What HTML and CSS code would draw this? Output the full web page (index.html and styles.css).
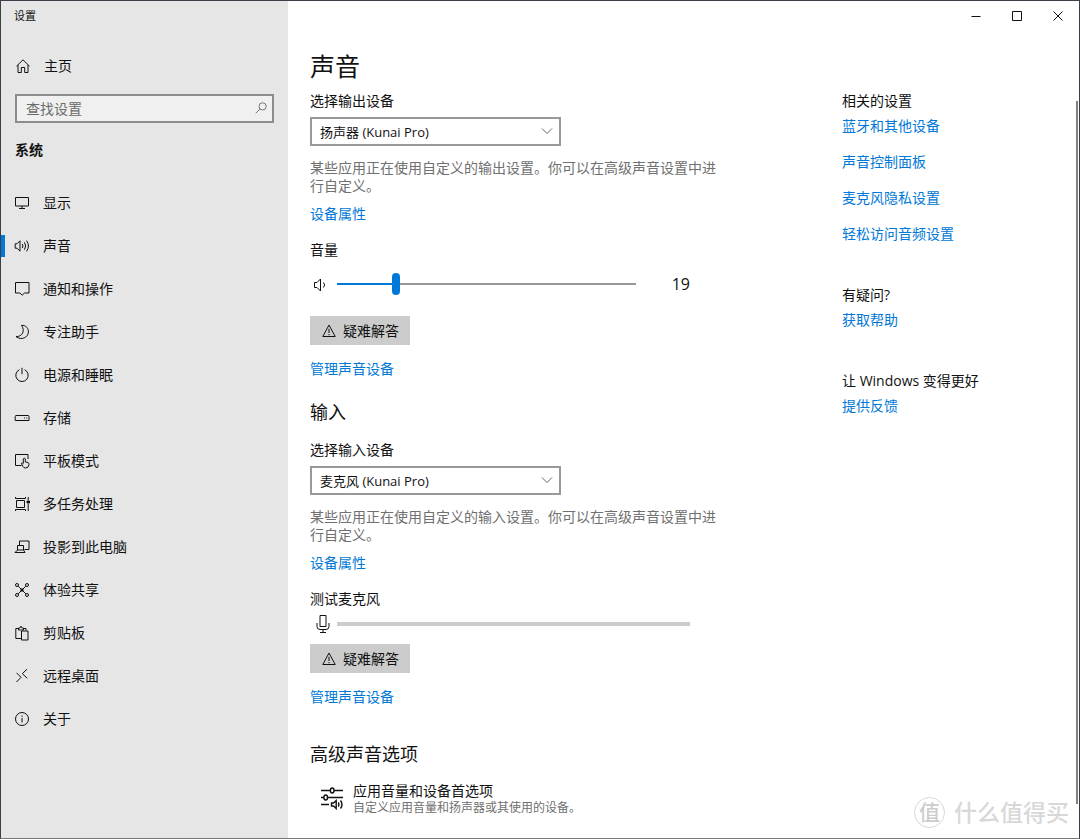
FILE: index.html
```html
<!DOCTYPE html>
<html lang="zh-CN">
<head>
<meta charset="utf-8">
<title>设置</title>
<link rel="stylesheet" href="styles.css">
</head>
<body>
<svg class="defs" aria-hidden="true">
  <symbol id="warn" viewBox="0 0 14 14"><path d="M7 1 13.2 12.5H.8Z M7 4.8V9 M7 10V11.2"/></symbol>
  <symbol id="chevron" viewBox="0 0 12 8"><path d="M1 1.5 6 6.5 11 1.5"/></symbol>
</svg>
<div class="window">
  <aside class="sidebar">
    <div class="caption">设置</div>
    <a class="home" href="#">
      <svg class="icon" viewBox="0 0 16 16"><path d="M1.5 8.2 8 1.8 14.5 8.2 M3 7V14.5H6.3V9.5H9.7V14.5H13V7"/></svg>
      主页
    </a>
    <div class="search">
      <input type="search" placeholder="查找设置" aria-label="查找设置">
      <svg class="search-icon" viewBox="0 0 12 12"><circle cx="7.6" cy="4.4" r="3.6"/><path d="M5 7 .7 11.3"/></svg>
    </div>
    <h2 class="group">系统</h2>
    <nav>
      <ul class="nav">
        <li><a href="#"><svg class="icon" viewBox="0 0 16 16"><path d="M1.5 2.5H14.5V11H1.5Z M8 11V13.5 M5 13.5H11"/></svg>显示</a></li>
        <li><a class="active" href="#"><svg class="icon" viewBox="0 0 16 16"><path d="M1.2 5.8H3L6 2.8V13.2L3 10.2H1.2Z M8.3 6Q9.6 8 8.3 10 M10.4 4.3Q13 8 10.4 11.7 M12.5 2.6Q16.4 8 12.5 13.4"/></svg>声音</a></li>
        <li><a href="#"><svg class="icon" viewBox="0 0 16 16"><path d="M1.5 1.5H15V12H10.5L8.2 14.2 5.9 12H1.5Z"/></svg>通知和操作</a></li>
        <li><a href="#"><svg class="icon" viewBox="0 0 16 16"><path d="M7.5 1.3C12 1 14.7 4.6 14.4 8.2 14 13.5 7.5 16.8 2 12.6 8.7 12.8 11.3 6.5 7.5 1.3Z"/></svg>专注助手</a></li>
        <li><a href="#"><svg class="icon" viewBox="0 0 16 16"><path d="M5.4 2.7A6.2 6.2 0 1 0 10.6 2.7 M8 .8V7.2"/></svg>电源和睡眠</a></li>
        <li><a href="#"><svg class="icon" viewBox="0 0 16 16"><path d="M2 5.5H14Q15 5.5 15 6.5V10.5H1.2V6.5Q1.2 5.5 2 5.5Z M10 8H11 M12.2 8H13.2"/></svg>存储</a></li>
        <li><a href="#"><svg class="icon" viewBox="0 0 16 16"><path d="M7.5 12.5H1.5V1.5H14V6 M9.3 10.5V5.8Q10.3 4.5 11.3 5.8V9L14 9.5Q15.2 10 15 11.5 14.7 15 11.7 15 9.5 15 8.8 13.3L7.3 10.3Q8.3 9.4 9.3 10.8"/></svg>平板模式</a></li>
        <li><a href="#"><svg class="icon" viewBox="0 0 16 16"><path d="M2.5 4.5H10.5V11.5H2.5Z M1.5 1V2.5H11.5V1 M1.5 15V13.5H11.5V15 M14.2 1V4 M14.2 8V15"/><path d="M13 5H15.5V7H13Z" fill="currentColor"/></svg>多任务处理</a></li>
        <li><a href="#"><svg class="icon" viewBox="0 0 16 16"><path d="M5.5 6V2H15V10.5H10.5 M3.5 6.5H9.5V11L11 13.5H1L3.5 11Z M3.5 11H9.5"/></svg>投影到此电脑</a></li>
        <li><a href="#"><svg class="icon" viewBox="0 0 16 16"><path d="M4.2 4.2 7 7 M11.8 4.2 9 7 M4.2 11.8 7 9 M11.8 11.8 9 9"/><circle cx="3" cy="3" r="1.5"/><circle cx="13" cy="3" r="1.5"/><circle cx="3" cy="13" r="1.5"/><circle cx="13" cy="13" r="1.5"/><circle cx="8" cy="8" r="1.2" fill="currentColor"/></svg>体验共享</a></li>
        <li><a href="#"><svg class="icon" viewBox="0 0 16 16"><path d="M7 13.5H1.8V3.5H4.5 M9.5 3.5H12V5.5 M4.5 5V3H6L7 1.2 8.2 3H9.5V5Z M7.5 6H14V15H7.5Z"/></svg>剪贴板</a></li>
        <li><a href="#"><svg class="icon" viewBox="0 0 16 16"><path d="M2.5 4.8 7 9.3 2.5 14 M13 1.2 8.3 5.7 13.2 10.2"/></svg>远程桌面</a></li>
        <li><a href="#"><svg class="icon" viewBox="0 0 16 16"><circle cx="8" cy="8" r="6.5"/><path d="M8 7V11.5 M8 4.5V5.8"/></svg>关于</a></li>
      </ul>
    </nav>
  </aside>

  <div class="page">
    <header class="titlebar">
      <button aria-label="最小化"><svg viewBox="0 0 10 10"><path d="M.5 5.5H9.5"/></svg></button>
      <button aria-label="最大化"><svg viewBox="0 0 10 10"><path d="M.5 .5H9.5V9.5H.5Z"/></svg></button>
      <button aria-label="关闭"><svg viewBox="0 0 10 10"><path d="M.5 .5 9.5 9.5 M9.5 .5 .5 9.5"/></svg></button>
    </header>
    <div class="content">
      <main>
        <h1>声音</h1>
        <section>
          <label class="label" for="output">选择输出设备</label>
          <div class="select">
            <select id="output"><option>扬声器 (Kunai Pro)</option></select>
            <svg class="chevron"><use href="#chevron"/></svg>
          </div>
          <p class="note">某些应用正在使用自定义的输出设置。你可以在高级声音设置中进行自定义。</p>
          <a class="link" href="#">设备属性</a>
          <label class="label spaced" for="volume">音量</label>
          <div class="volume">
            <svg class="speaker" viewBox="0 0 16 16"><path d="M1.5 5.5H4L7.5 2V14L4 10.5H1.5Z M10.5 5.5Q12.8 8 10.5 10.5"/></svg>
            <input id="volume" type="range" min="0" max="100" value="19">
            <output for="volume">19</output>
          </div>
          <button class="trouble"><svg><use href="#warn"/></svg>疑难解答</button>
          <a class="link" href="#">管理声音设备</a>
        </section>
        <section>
          <h2>输入</h2>
          <label class="label" for="input">选择输入设备</label>
          <div class="select">
            <select id="input"><option>麦克风 (Kunai Pro)</option></select>
            <svg class="chevron"><use href="#chevron"/></svg>
          </div>
          <p class="note">某些应用正在使用自定义的输入设置。你可以在高级声音设置中进行自定义。</p>
          <a class="link" href="#">设备属性</a>
          <div class="label spaced">测试麦克风</div>
          <div class="mic">
            <svg viewBox="0 0 16 20"><path d="M5 1.5H11V12.5H5Z M2 9V12.5Q2 15.5 5 15.5H11Q14 15.5 14 12.5V9 M8 15.5V18.5 M5 18.5H11"/></svg>
            <div class="meter"></div>
          </div>
          <button class="trouble"><svg><use href="#warn"/></svg>疑难解答</button>
          <a class="link" href="#">管理声音设备</a>
        </section>
        <section class="advanced">
          <h2>高级声音选项</h2>
          <a class="option" href="#">
            <svg viewBox="0 0 24 24"><path d="M1 4.5H10.5 M14 4.5H23 M1 11.5H4 M7.5 11.5H23 M1 18.5H9"/><ellipse cx="12.2" cy="4.5" rx="1.8" ry="2.5"/><ellipse cx="5.7" cy="11.5" rx="1.8" ry="2.5"/><path d="M11.5 17H13.5L16.2 14.5V22.5L13.5 20H11.5Z M18.2 16.5Q19.6 18.5 18.2 20.5 M20.5 14.5Q23.5 18.5 20.5 22.5"/></svg>
            <span class="option-text"><span>应用音量和设备首选项</span><small>自定义应用音量和扬声器或其使用的设备。</small></span>
          </a>
        </section>
      </main>
      <aside class="related">
        <section>
          <h3>相关的设置</h3>
          <ul>
            <li><a class="link" href="#">蓝牙和其他设备</a></li>
            <li><a class="link" href="#">声音控制面板</a></li>
            <li><a class="link" href="#">麦克风隐私设置</a></li>
            <li><a class="link" href="#">轻松访问音频设置</a></li>
          </ul>
        </section>
        <section>
          <h3>有疑问?</h3>
          <a class="link" href="#">获取帮助</a>
        </section>
        <section>
          <h3>让 Windows 变得更好</h3>
          <a class="link" href="#">提供反馈</a>
        </section>
      </aside>
    </div>
  </div>
  <div class="scrollbar"></div>
  <div class="watermark"><span class="seal">值</span>什么值得买</div>
</div>
</body>
</html>
```
FILE: styles.css
```css
* { box-sizing: border-box; }
body {
  margin: 0;
  font: 14px/20px "Open Sans", "Noto Sans CJK SC", sans-serif;
  color: #111;
  background: #fff;
}
h1, h2, h3, p, ul { margin: 0; padding: 0; font-weight: 400; }
ul { list-style: none; }
a { color: inherit; text-decoration: none; }
button, input, select { font: inherit; color: inherit; }
svg { display: block; flex: none; fill: none; stroke: currentColor; stroke-width: 1; }
.defs { position: absolute; width: 0; height: 0; }

.window {
  position: relative;
  display: flex;
  min-height: 100vh;
  border: 1px solid #3d3f48;
  border-bottom-color: #777;
  background: #fff;
}

.sidebar { flex: none; width: 287px; background: #e6e6e6; }
.caption { padding: 5px 13px 0; font-size: 11px; }
.home { display: flex; align-items: center; gap: 13px; padding: 30px 14px 0; }
.icon { width: 16px; height: 16px; }
.search { position: relative; margin: 18px 14px 0; }
.search input {
  display: block;
  width: 100%;
  height: 29px;
  padding: 0 30px 0 9px;
  border: 2px solid #8c8c8c;
  border-radius: 0;
  background: #f0f0f0;
  appearance: none;
  outline: 0;
}
.search input::placeholder { color: #6b6b6b; opacity: 1; }
.search-icon { position: absolute; right: 7px; top: 8px; width: 12px; height: 12px; color: #777; }
.group { margin: 17px 14px 21px; font-size: 14px; font-weight: 700; }
.nav a { display: flex; align-items: center; gap: 13px; height: 43px; padding-left: 13px; position: relative; }
.nav .active::before { content: ""; position: absolute; left: 0; width: 4px; height: 22px; background: #0078d7; }

.page { flex: 1; min-width: 0; }
.titlebar { display: flex; justify-content: flex-end; height: 29px; padding-right: 1px; }
.titlebar button {
  display: flex;
  align-items: center;
  justify-content: center;
  width: 41px;
  padding: 0;
  border: 0;
  background: none;
}
.titlebar svg { width: 10px; height: 10px; }

.content { display: grid; grid-template-columns: minmax(0, 1fr) 237px; padding: 18px 0 20px 22px; }
h1 { margin-bottom: 7px; font-size: 25px; line-height: 36px; }
main h2 { margin-bottom: 15px; font-size: 18px; line-height: 26px; }
section + section { margin-top: 20px; }
section + .advanced { margin-top: 34px; }
.label { display: block; }
.label.spaced { margin-top: 16px; }
.link { display: table; color: #0078d7; }
.select { position: relative; width: 251px; margin: 6px 0 13px; }
.select select {
  display: block;
  width: 100%;
  height: 29px;
  padding: 0 30px 0 8px;
  border: 2px solid #999;
  border-radius: 0;
  background: #fff;
  appearance: none;
  font-size: 13px;
}
.chevron { position: absolute; right: 8px; top: 10px; width: 12px; height: 8px; color: #666; pointer-events: none; }
.note { max-width: 410px; margin-bottom: 9px; line-height: 18px; color: #707070; }

.volume { display: flex; align-items: center; width: 380px; height: 48px; margin-bottom: 8px; }
.speaker { width: 16px; height: 16px; margin: 2px 8px 0 3px; }
.volume input { width: 299px; height: 22px; margin: 0; background: none; appearance: none; }
.volume input::-webkit-slider-runnable-track {
  height: 2px;
  background: linear-gradient(90deg, #0078d7 19%, #999 19%);
}
.volume input::-webkit-slider-thumb {
  appearance: none;
  width: 8px;
  height: 22px;
  margin-top: -10px;
  border-radius: 4px;
  background: #0078d7;
}
.volume output { margin-left: auto; font-size: 16px; }
.trouble {
  display: flex;
  align-items: center;
  gap: 7px;
  height: 29px;
  margin-bottom: 14px;
  padding: 0 11px 0 12px;
  border: 0;
  background: #ccc;
}
.trouble svg { width: 14px; height: 14px; }
.mic { display: flex; align-items: center; gap: 6px; width: 380px; height: 29px; margin-bottom: 6px; padding-left: 5px; }
.mic svg { width: 16px; height: 20px; }
.meter { flex: 1; height: 4px; background: #ccc; }
.advanced h2 { margin-bottom: 14px; }
.option { display: flex; align-items: center; gap: 9px; padding-left: 10px; }
.option svg { width: 24px; height: 24px; stroke-width: 1.4; }
.option-text { display: flex; flex-direction: column; }
.option-text small { font-size: 12px; line-height: 14px; color: #707070; }

.related { padding-top: 43px; }
.related h3 { margin-bottom: 5px; font-size: 14px; }
.related li + li { margin-top: 16px; }
.related section + section { margin-top: 41px; }

.scrollbar { position: absolute; top: 100px; right: 1px; bottom: 34px; width: 2px; background: #808080; }
.watermark {
  position: absolute;
  right: 10px;
  bottom: 10px;
  display: flex;
  align-items: center;
  gap: 9px;
  font-size: 23px;
  font-weight: 500;
  line-height: 32px;
  color: #d8d8d8;
}
.seal {
  width: 31px;
  height: 31px;
  border: 1px solid #d8d8d8;
  border-radius: 50%;
  font-size: 21px;
  line-height: 28px;
  text-align: center;
  color: #ccc;
}
```
